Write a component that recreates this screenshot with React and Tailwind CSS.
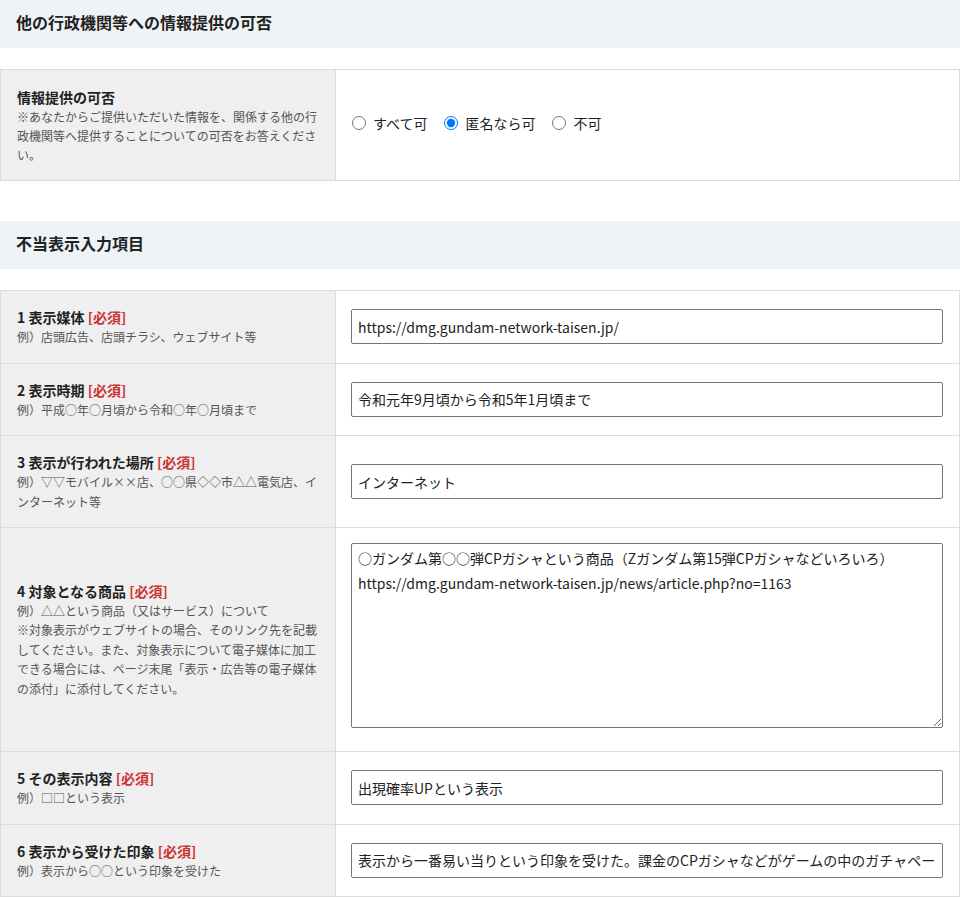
import React from 'react';

const font = { fontFamily: '"Noto Sans CJK JP", "Noto Sans", sans-serif' };

const rows = [
  {
    no: 1,
    title: '表示媒体',
    note: ['例）店頭広告、店頭チラシ、ウェブサイト等'],
    value: 'https://dmg.gundam-network-taisen.jp/',
  },
  {
    no: 2,
    title: '表示時期',
    note: ['例）平成○年○月頃から令和○年○月頃まで'],
    value: '令和元年9月頃から令和5年1月頃まで',
  },
  {
    no: 3,
    title: '表示が行われた場所',
    note: ['例）▽▽モバイル××店、○○県◇◇市△△電気店、インターネット等'],
    value: 'インターネット',
  },
  {
    no: 4,
    title: '対象となる商品',
    note: [
      '例）△△という商品（又はサービス）について',
      '※対象表示がウェブサイトの場合、そのリンク先を記載してください。また、対象表示について電子媒体に加工できる場合には、ページ末尾「表示・広告等の電子媒体の添付」に添付してください。',
    ],
    value:
      '○ガンダム第○○弾CPガシャという商品（Zガンダム第15弾CPガシャなどいろいろ）\nhttps://dmg.gundam-network-taisen.jp/news/article.php?no=1163',
    multiline: true,
  },
  {
    no: 5,
    title: 'その表示内容',
    note: ['例）□□という表示'],
    value: '出現確率UPという表示',
  },
  {
    no: 6,
    title: '表示から受けた印象',
    note: ['例）表示から○○という印象を受けた'],
    value:
      '表示から一番易い当りという印象を受けた。課金のCPガシャなどがゲームの中のガチャページ機能で確率UPと表示されていた。',
  },
];

function SectionHeader({ children }) {
  return (
    <div className="h-12 bg-[#eef3f6] px-4 flex items-center">
      <h2 className="text-[16px] font-bold text-[#222] leading-none pb-[4px]">{children}</h2>
    </div>
  );
}

function LabelCell({ children }) {
  return (
    <td className="w-[335px] bg-[#efefef] border border-[#dcdcdc] px-4 py-4 align-middle">
      {children}
    </td>
  );
}

export default function App() {
  return (
    <div className="w-[960px] bg-white text-[#333]" style={font}>
      <SectionHeader>他の行政機関等への情報提供の可否</SectionHeader>

      <table className="mt-[21px] w-full border-collapse table-fixed">
        <tbody>
          <tr className="h-[111px]">
            <LabelCell>
              <div className="text-[14px] font-bold text-[#222] leading-[20px]">情報提供の可否</div>
              <div className="text-[12px] text-[#555] leading-[19px]">
                ※あなたからご提供いただいた情報を、関係する他の行政機関等へ提供することについての可否をお答えください。
              </div>
            </LabelCell>
            <td className="border border-[#dcdcdc] px-4 align-middle">
              <div className="flex items-center gap-[17px] text-[14px] text-[#222] pb-[4px]">
                {['すべて可', '匿名なら可', '不可'].map((o) => (
                  <label key={o} className="flex items-center gap-[7px]">
                    <input
                      type="radio"
                      name="share"
                      defaultChecked={o === '匿名なら可'}
                      className="m-0 w-[14px] h-[14px] accent-[#0075ff]"
                    />
                    <span>{o}</span>
                  </label>
                ))}
              </div>
            </td>
          </tr>
        </tbody>
      </table>

      <div className="h-[40px]" />
      <SectionHeader>不当表示入力項目</SectionHeader>

      <table className="mt-[21px] w-full border-collapse table-fixed">
        <tbody>
          {rows.map((r) => (
            <tr key={r.no}>
              <LabelCell>
                <div className="text-[14px] font-bold text-[#222] leading-[20px]">
                  {r.no} {r.title} <span className="text-[#c33]">[必須]</span>
                </div>
                <div className="text-[12px] text-[#555] leading-[19.5px]">
                  {r.note.map((n) => (
                    <div key={n}>{n}</div>
                  ))}
                </div>
              </LabelCell>
              <td
                className={
                  r.multiline
                    ? 'border border-[#dcdcdc] pl-[15px] pr-4 pt-[15px] pb-[23px] align-top'
                    : 'border border-[#dcdcdc] pl-[15px] pr-4 py-[18px] align-middle'
                }
              >
                {r.multiline ? (
                  <textarea
                    defaultValue={r.value}
                    spellCheck={false}
                    className="block w-full h-[185px] border border-[#767676] rounded-[2px] px-[6px] py-[2px] text-[14px] leading-[25px] text-[#222] resize-y outline-none"
                    style={font}
                  />
                ) : (
                  <input
                    type="text"
                    defaultValue={r.value}
                    spellCheck={false}
                    className="block w-full h-[35px] border border-[#767676] rounded-[2px] px-[6px] text-[14px] text-[#222] outline-none"
                    style={font}
                  />
                )}
              </td>
            </tr>
          ))}
        </tbody>
      </table>
    </div>
  );
}
